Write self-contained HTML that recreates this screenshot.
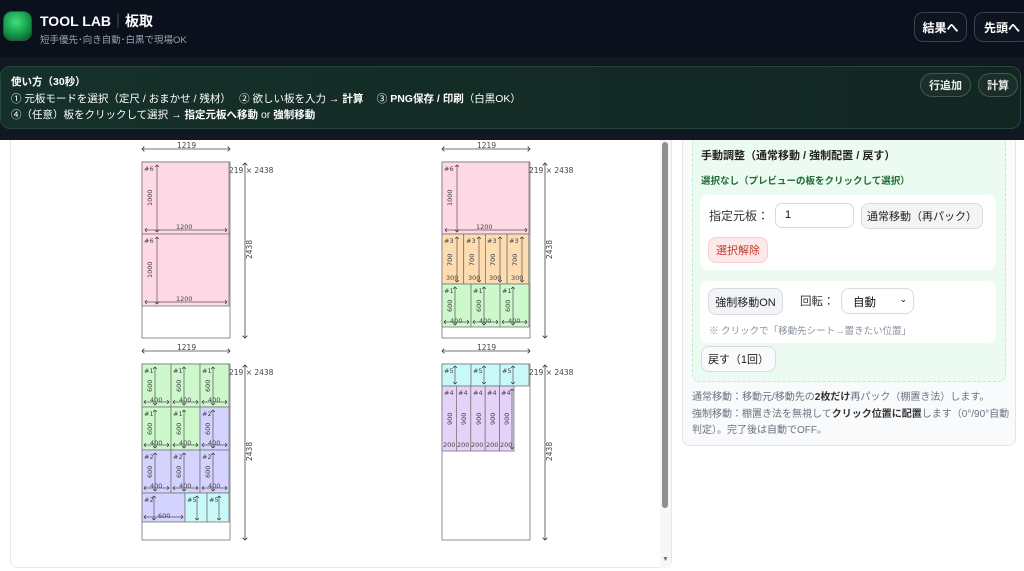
<!DOCTYPE html><html><head><meta charset="utf-8"><style>
*{box-sizing:border-box;margin:0;padding:0}
body{width:1024px;height:571px;overflow:hidden;background:#fff;font-family:"Liberation Sans","Noto Sans CJK JP",sans-serif;position:relative}
.a{position:absolute}
.hb{border:1px solid #3a4250;border-radius:9px;color:#fff;font-size:12px;font-weight:bold;display:flex;align-items:center;justify-content:center;background:#0e1420}
.pb{border:1px solid #3d5a52;border-radius:12px;color:#e8efe9;font-size:11px;font-weight:bold;display:flex;align-items:center;justify-content:center;background:#1c2e2a}
.b{border:1px solid #d6dbe2;border-radius:8px;background:#f3f4f6;font-size:11px;color:#222;display:flex;align-items:center;justify-content:center}
svg text{font-family:"DejaVu Sans",sans-serif}
</style></head><body>
<div class="a" style="left:0;top:0;width:1024px;height:57px;background:#0b111c"></div>
<div class="a" style="left:3px;top:11px;width:29px;height:30px;border-radius:9px;background:radial-gradient(circle at 45% 35%,#3fe07a,#169a4a 55%,#0c4a26);border:1px solid #2a5a3a"></div>
<div class="a" style="left:40px;top:11px;color:#fff;font-size:14px;font-weight:bold">TOOL LAB<span style="color:#777;font-weight:normal">｜</span>板取</div>
<div class="a" style="left:40px;top:32px;color:#9aa3ae;font-size:9.5px">短手優先･向き自動･白黒で現場OK</div>
<div class="a hb" style="left:914px;top:12px;width:53px;height:30px">結果へ</div>
<div class="a hb" style="left:974px;top:12px;width:56px;height:30px">先頭へ</div>
<div class="a" style="left:0;top:57px;width:1024px;height:83px;background:#111821"></div>
<div class="a" style="left:0;top:66px;width:1021px;height:63px;border-radius:10px;background:linear-gradient(90deg,#15302a,#132722);border:1px solid #24463d"></div>
<div class="a" style="left:11px;top:74px;color:#fff;font-size:10.5px;line-height:16.5px">
<b>使い方（30秒）</b><br>① 元板モードを選択（定尺 / おまかせ / 残材）　 ② 欲しい板を入力 → <b>計算</b>　 ③ <b>PNG保存 / 印刷</b>（白黒OK）<br>④（任意）板をクリックして選択 → <b>指定元板へ移動</b> or <b>強制移動</b></div>
<div class="a pb" style="left:920px;top:73px;width:51px;height:24px">行追加</div>
<div class="a pb" style="left:978px;top:73px;width:40px;height:24px">計算</div>

<div class="a" style="left:10px;top:140px;width:662px;height:428px;border:1px solid #e5e7eb;border-top:none;border-radius:0 0 8px 8px"></div>
<div class="a" style="left:660px;top:140px;width:11px;height:428px;background:#f7f7f9"></div>
<div class="a" style="left:662px;top:142px;width:6px;height:366px;background:#909090;border-radius:3px"></div>
<div class="a" style="left:662px;top:556px;font-size:7px;color:#777">▼</div>

<svg class="a" style="left:0;top:140px" width="660" height="430" viewBox="0 140 660 430">
<defs><marker id="m" markerWidth="6" markerHeight="6" refX="3" refY="3" orient="auto-start-reverse"><path d="M0,0L3,3L0,6" fill="none" stroke="#333" stroke-width="1"/></marker></defs>
<g id="dims" font-size="7.5" fill="#444">
<line x1="142" y1="149" x2="230" y2="149" stroke="#444" stroke-width=".8" marker-start="url(#m)" marker-end="url(#m)"/><text x="177" y="148">1219</text>
<line x1="245" y1="163" x2="245" y2="338" stroke="#444" stroke-width=".8" marker-start="url(#m)" marker-end="url(#m)"/>
<text x="229" y="173">219 × 2438</text>
<text transform="translate(252,259) rotate(-90)">2438</text>
</g>
<g stroke="#777" stroke-width=".8">
<rect x="142" y="162" width="88" height="176" fill="#fff"/>
<rect x="142" y="162" width="87" height="72" fill="#ffd8e6"/><rect x="142" y="234" width="87" height="72" fill="#ffd8e6"/>
<rect x="442" y="162" width="88" height="176" fill="#fff"/>
<rect x="442" y="162" width="87" height="72" fill="#ffd8e6"/>
<rect x="442" y="234" width="21.7" height="50" fill="#fddcb2"/><rect x="463.7" y="234" width="21.7" height="50" fill="#fddcb2"/><rect x="485.4" y="234" width="21.7" height="50" fill="#fddcb2"/><rect x="507.1" y="234" width="21.7" height="50" fill="#fddcb2"/>
<rect x="442" y="284" width="29" height="43" fill="#ccf8cc"/><rect x="471" y="284" width="29" height="43" fill="#ccf8cc"/><rect x="500" y="284" width="29" height="43" fill="#ccf8cc"/>
<rect x="142" y="364" width="88" height="176" fill="#fff"/>
<rect x="142" y="364" width="29" height="43" fill="#ccf8cc"/><rect x="171" y="364" width="29" height="43" fill="#ccf8cc"/><rect x="200" y="364" width="29" height="43" fill="#ccf8cc"/>
<rect x="142" y="407" width="29" height="43" fill="#ccf8cc"/><rect x="171" y="407" width="29" height="43" fill="#ccf8cc"/><rect x="200" y="407" width="29" height="43" fill="#d4d2ff"/>
<rect x="142" y="450" width="29" height="43" fill="#d4d2ff"/><rect x="171" y="450" width="29" height="43" fill="#d4d2ff"/><rect x="200" y="450" width="29" height="43" fill="#d4d2ff"/>
<rect x="142" y="493" width="43" height="29" fill="#d4d2ff"/><rect x="185" y="493" width="22" height="29" fill="#c8f8f8"/><rect x="207" y="493" width="22" height="29" fill="#c8f8f8"/>
<rect x="442" y="364" width="88" height="176" fill="#fff"/>
<rect x="442" y="364" width="29" height="22" fill="#c8f8f8"/><rect x="471" y="364" width="29" height="22" fill="#c8f8f8"/><rect x="500" y="364" width="29" height="22" fill="#c8f8f8"/>
<rect x="442" y="386" width="14.4" height="65" fill="#e6d2f8"/><rect x="456.4" y="386" width="14.4" height="65" fill="#e6d2f8"/><rect x="470.8" y="386" width="14.4" height="65" fill="#e6d2f8"/><rect x="485.2" y="386" width="14.4" height="65" fill="#e6d2f8"/><rect x="499.6" y="386" width="14.4" height="65" fill="#e6d2f8"/>
</g>
<use href="#dims" x="300"/><use href="#dims" y="202"/><use href="#dims" x="300" y="202"/>
<g stroke="#555" stroke-width=".7" fill="none" marker-start="url(#m)" marker-end="url(#m)">
<line x1="157" y1="165" x2="157" y2="232"/><line x1="145" y1="230" x2="227" y2="230"/>
<line x1="157" y1="237" x2="157" y2="304"/><line x1="145" y1="302" x2="227" y2="302"/>
<line x1="457" y1="165" x2="457" y2="232"/><line x1="445" y1="230" x2="527" y2="230"/>
<line x1="457" y1="237" x2="457" y2="282"/><line x1="479" y1="237" x2="479" y2="282"/><line x1="500" y1="237" x2="500" y2="282"/><line x1="522" y1="237" x2="522" y2="282"/>
<line x1="455" y1="287" x2="455" y2="325"/><line x1="484" y1="287" x2="484" y2="325"/><line x1="513" y1="287" x2="513" y2="325"/>
<line x1="444" y1="322" x2="469" y2="322"/><line x1="473" y1="322" x2="498" y2="322"/><line x1="502" y1="322" x2="527" y2="322"/>
<line x1="155" y1="367" x2="155" y2="405"/><line x1="184" y1="367" x2="184" y2="405"/><line x1="213" y1="367" x2="213" y2="405"/>
<line x1="155" y1="410" x2="155" y2="448"/><line x1="184" y1="410" x2="184" y2="448"/><line x1="213" y1="410" x2="213" y2="448"/>
<line x1="155" y1="453" x2="155" y2="491"/><line x1="184" y1="453" x2="184" y2="491"/><line x1="213" y1="453" x2="213" y2="491"/>
<line x1="144" y1="402" x2="169" y2="402"/><line x1="173" y1="402" x2="198" y2="402"/><line x1="202" y1="402" x2="227" y2="402"/>
<line x1="144" y1="445" x2="169" y2="445"/><line x1="173" y1="445" x2="198" y2="445"/><line x1="202" y1="445" x2="227" y2="445"/>
<line x1="144" y1="488" x2="169" y2="488"/><line x1="173" y1="488" x2="198" y2="488"/><line x1="202" y1="488" x2="227" y2="488"/>
<line x1="154" y1="496" x2="154" y2="520"/><line x1="144" y1="517" x2="183" y2="517"/><line x1="197" y1="496" x2="197" y2="520"/><line x1="219" y1="496" x2="219" y2="520"/>
<line x1="455" y1="366" x2="455" y2="384"/><line x1="484" y1="366" x2="484" y2="384"/><line x1="513" y1="366" x2="513" y2="384"/>
<line x1="512" y1="389" x2="512" y2="449"/>
</g>
<g font-size="6.5" fill="#444">
<text x="144" y="171">#6</text><text x="144" y="243">#6</text><text x="444" y="171">#6</text>
<text x="176" y="229">1200</text><text x="176" y="301">1200</text><text x="476" y="229">1200</text>
<text transform="translate(152,206) rotate(-90)">1000</text><text transform="translate(152,278) rotate(-90)">1000</text><text transform="translate(452,206) rotate(-90)">1000</text>
<text x="444" y="243">#3</text><text x="466" y="243">#3</text><text x="487" y="243">#3</text><text x="509" y="243">#3</text>
<text transform="translate(452,266) rotate(-90)">700</text><text transform="translate(474,266) rotate(-90)">700</text><text transform="translate(495,266) rotate(-90)">700</text><text transform="translate(517,266) rotate(-90)">700</text>
<text x="444" y="293">#1</text><text x="473" y="293">#1</text><text x="502" y="293">#1</text>
<text transform="translate(452,312) rotate(-90)">600</text><text transform="translate(481,312) rotate(-90)">600</text><text transform="translate(510,312) rotate(-90)">600</text>
<text x="144" y="373">#1</text><text x="173" y="373">#1</text><text x="202" y="373">#1</text>
<text x="144" y="416">#1</text><text x="173" y="416">#1</text><text x="202" y="416">#2</text>
<text x="144" y="459">#2</text><text x="173" y="459">#2</text><text x="202" y="459">#2</text>
<text x="144" y="502">#2</text><text x="187" y="502">#5</text><text x="209" y="502">#5</text>
<text x="444" y="373">#5</text><text x="473" y="373">#5</text><text x="502" y="373">#5</text>
<text x="444" y="395">#4</text><text x="458" y="395">#4</text><text x="473" y="395">#4</text><text x="487" y="395">#4</text><text x="501" y="395">#4</text>
<text transform="translate(152,392) rotate(-90)">600</text><text transform="translate(181,392) rotate(-90)">600</text><text transform="translate(210,392) rotate(-90)">600</text>
<text transform="translate(152,435) rotate(-90)">600</text><text transform="translate(181,435) rotate(-90)">600</text><text transform="translate(210,435) rotate(-90)">600</text>
<text transform="translate(152,478) rotate(-90)">600</text><text transform="translate(181,478) rotate(-90)">600</text><text transform="translate(210,478) rotate(-90)">600</text>
<text transform="translate(452,425) rotate(-90)">900</text><text transform="translate(466,425) rotate(-90)">900</text><text transform="translate(481,425) rotate(-90)">900</text><text transform="translate(495,425) rotate(-90)">900</text><text transform="translate(509,425) rotate(-90)">900</text>
<text x="150" y="402">400</text><text x="179" y="402">400</text><text x="208" y="402">400</text><text x="150" y="445">400</text><text x="179" y="445">400</text><text x="208" y="445">400</text><text x="150" y="488">400</text><text x="179" y="488">400</text><text x="208" y="488">400</text>
<text x="450" y="323">400</text><text x="479" y="323">400</text><text x="508" y="323">400</text>
<text x="446" y="280">300</text><text x="468" y="280">300</text><text x="489" y="280">300</text><text x="511" y="280">300</text>
<text x="158" y="518">600</text>
<text x="443" y="447">200</text><text x="457" y="447">200</text><text x="471" y="447">200</text><text x="486" y="447">200</text><text x="500" y="447">200</text>
</g>
</svg>

<div class="a" style="left:682px;top:130px;width:334px;height:316px;border:1px solid #e1e5ea;border-radius:8px;background:#f8fafc"></div>
<div class="a" style="left:692px;top:130px;width:314px;height:252px;border:1px dashed #c5e8d0;border-radius:8px;background:#ecfbf1"></div>
<div class="a" style="left:0;top:130px;width:1024px;height:10px;background:#111821"></div>
<div class="a" style="left:701px;top:147px;font-size:11px;font-weight:bold;color:#222">手動調整（通常移動 / 強制配置 / 戻す）</div>
<div class="a" style="left:701px;top:173px;font-size:9.5px;font-weight:bold;color:#1e6b35">選択なし（プレビューの板をクリックして選択）</div>
<div class="a" style="left:700px;top:195px;width:296px;height:75px;background:#fff;border-radius:8px"></div>
<div class="a" style="left:709px;top:207px;font-size:12px;color:#333">指定元板：</div>
<div class="a" style="left:775px;top:203px;width:79px;height:25px;border:1px solid #d6dbe2;border-radius:7px;background:#fff;font-size:11px;padding:5px 9px;color:#111">1</div>
<div class="a b" style="left:861px;top:203px;width:122px;height:26px">通常移動（再パック）</div>
<div class="a b" style="left:708px;top:237px;width:60px;height:26px;background:#fde9ea;border-color:#f5cfd2;color:#c0392b">選択解除</div>
<div class="a" style="left:700px;top:281px;width:296px;height:62px;background:#fff;border-radius:8px"></div>
<div class="a b" style="left:708px;top:288px;width:75px;height:27px">強制移動ON</div>
<div class="a" style="left:800px;top:293px;font-size:11.5px;color:#333">回転：</div>
<div class="a" style="left:841px;top:288px;width:73px;height:26px;border:1px solid #d6dbe2;border-radius:8px;background:#fff;font-size:11.5px;padding:5px 11px;color:#111">自動<span style="position:absolute;right:6px;top:5px;font-size:9px">⌄</span></div>
<div class="a" style="left:709px;top:323px;font-size:9.5px;color:#8a929c">※ クリックで「移動先シート→置きたい位置」</div>
<div class="a b" style="left:701px;top:346px;width:75px;height:26px;background:#f8fafc">戻す（1回）</div>
<div class="a" style="left:692px;top:390px;font-size:10px;line-height:16.7px;color:#6b7280;width:320px">通常移動：移動元/移動先の<b style="color:#333">2枚だけ</b>再パック（棚置き法）します。<br>強制移動：棚置き法を無視して<b style="color:#333">クリック位置に配置</b>します（0°/90°自動判定）。完了後は自動でOFF。</div>
</body></html>
